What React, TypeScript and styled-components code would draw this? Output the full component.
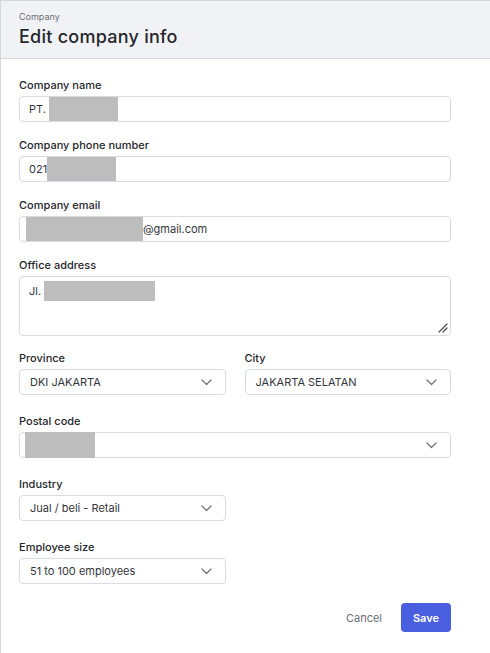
import React from "react";
import styled, { createGlobalStyle } from "styled-components";

const GlobalStyle = createGlobalStyle`
  html, body {
    margin: 0;
    padding: 0;
    background: #ffffff;
    font-family: Inter, "Noto Sans", "Liberation Sans", sans-serif;
  }
`;

function Chevron() {
  return (
    <svg width="11" height="7" viewBox="0 0 11 7" fill="none">
      <path d="M1 1l4.5 4.5L10 1" stroke="#6b6f76" strokeWidth="1.2" strokeLinecap="round" strokeLinejoin="round" />
    </svg>
  );
}

function ResizeGrip() {
  return (
    <svg width="10" height="10" viewBox="0 0 10 10">
      <path d="M9 1L1 9M9 5L5 9" stroke="#555" strokeWidth="1.3" strokeLinecap="round" />
    </svg>
  );
}

interface SelectProps {
  value?: React.ReactNode;
  wide?: boolean;
}

function Select({ value, wide }: SelectProps) {
  return (
    <SelectBox wide={wide}>
      <SelectValue>{value}</SelectValue>
      <Chevron />
    </SelectBox>
  );
}

export default function App() {
  return (
    <>
      <GlobalStyle />
      <Panel>
        <Header>
          <Crumb>Company</Crumb>
          <Title>Edit company info</Title>
        </Header>
        <Form>
          <Field>
            <Label>Company name</Label>
            <InputBox>
              PT. <Redacted w={69} />
            </InputBox>
          </Field>
          <Field>
            <Label>Company phone number</Label>
            <InputBox>
              021<Redacted w={69} />
            </InputBox>
          </Field>
          <Field>
            <Label>Company email</Label>
            <InputBox flush>
              <Redacted w={117} />
              @gmail.com
            </InputBox>
          </Field>
          <Field gap={14}>
            <Label>Office address</Label>
            <TextArea>
              <TextLine>
                Jl. <Redacted w={111} h={20} />
              </TextLine>
              <Grip>
                <ResizeGrip />
              </Grip>
            </TextArea>
          </Field>
          <Row>
            <Field gap={18}>
              <Label>Province</Label>
              <Select value="DKI JAKARTA" wide />
            </Field>
            <Field gap={18}>
              <Label>City</Label>
              <Select value="JAKARTA SELATAN" wide />
            </Field>
          </Row>
          <Field gap={18}>
            <Label>Postal code</Label>
            <SelectBox wide flush>
              <Redacted w={70} h={26} />
              <Chevron />
            </SelectBox>
          </Field>
          <Field gap={18}>
            <Label>Industry</Label>
            <Select value="Jual / beli - Retail" />
          </Field>
          <Field gap={18}>
            <Label>Employee size</Label>
            <Select value="51 to 100 employees" />
          </Field>
          <Actions>
            <CancelButton>Cancel</CancelButton>
            <SaveButton>Save</SaveButton>
          </Actions>
        </Form>
      </Panel>
    </>
  );
}

const Panel = styled.div`
  min-height: 653px;
  box-sizing: border-box;
  border-left: 1px solid #d3d6dc;
  border-top: 1px solid #d3d6dc;
`;

const Header = styled.div`
  height: 58px;
  box-sizing: border-box;
  background: #f1f2f6;
  border-bottom: 1px solid #d3d6dc;
  padding: 10px 18px 0;
`;

const Crumb = styled.div`
  font-size: 9px;
  line-height: 12px;
  color: #6b6f76;
`;

const Title = styled.div`
  font-size: 18px;
  line-height: 24px;
  font-weight: 500;
  letter-spacing: 0.25px;
  color: #25272b;
  margin-top: 2px;
`;

const Form = styled.div`
  width: 432px;
  padding: 18px 0 0 18px;
  display: flex;
  flex-direction: column;
`;

const Field = styled.div<{ gap?: number }>`
  display: flex;
  flex-direction: column;
  flex: 1;
  margin-bottom: ${({ gap }) => gap ?? 15}px;
`;

const Row = styled.div`
  display: flex;
  gap: 19px;
`;

const Label = styled.div`
  font-size: 11px;
  line-height: 16px;
  font-weight: 500;
  color: #25272b;
  margin-bottom: 3px;
`;

const InputBox = styled.div<{ flush?: boolean }>`
  height: 26px;
  box-sizing: border-box;
  border: 1px solid #d8dbe0;
  border-radius: 4px;
  display: flex;
  align-items: center;
  padding-left: ${({ flush }) => (flush ? "6px" : "9px")};
  font-size: 11px;
  color: #33363b;
  white-space: pre;
`;

const Redacted = styled.span<{ w: number; h?: number }>`
  display: inline-block;
  width: ${({ w }) => w}px;
  height: ${({ h }) => h ?? 24}px;
  background: #bdbdbd;
`;

const TextArea = styled.div`
  position: relative;
  height: 60px;
  box-sizing: border-box;
  border: 1px solid #d8dbe0;
  border-radius: 4px;
  padding: 4px 9px;
  font-size: 11px;
  color: #33363b;
`;

const TextLine = styled.div`
  display: flex;
  align-items: center;
  white-space: pre;
`;

const Grip = styled.div`
  position: absolute;
  right: 2px;
  bottom: 2px;
  line-height: 0;
`;

const SelectBox = styled.div<{ wide?: boolean; flush?: boolean }>`
  width: ${({ wide }) => (wide ? "100%" : "207px")};
  height: 26px;
  box-sizing: border-box;
  border: 1px solid #d8dbe0;
  border-radius: 4px;
  display: flex;
  align-items: center;
  justify-content: space-between;
  padding: ${({ flush }) => (flush ? "0 13px 0 5px" : "0 13px 0 10px")};
`;

const SelectValue = styled.span`
  font-size: 11px;
  color: #33363b;
`;

const Actions = styled.div`
  display: flex;
  justify-content: flex-end;
  align-items: center;
  gap: 19px;
  margin-top: 1px;
`;

const CancelButton = styled.button`
  border: none;
  background: none;
  padding: 0;
  font-family: inherit;
  font-size: 11px;
  color: #6b6f76;
`;

const SaveButton = styled.button`
  width: 50px;
  height: 29px;
  border: none;
  border-radius: 4px;
  background: #4a5fdf;
  color: #ffffff;
  font-family: inherit;
  font-size: 11px;
  font-weight: 600;
`;
